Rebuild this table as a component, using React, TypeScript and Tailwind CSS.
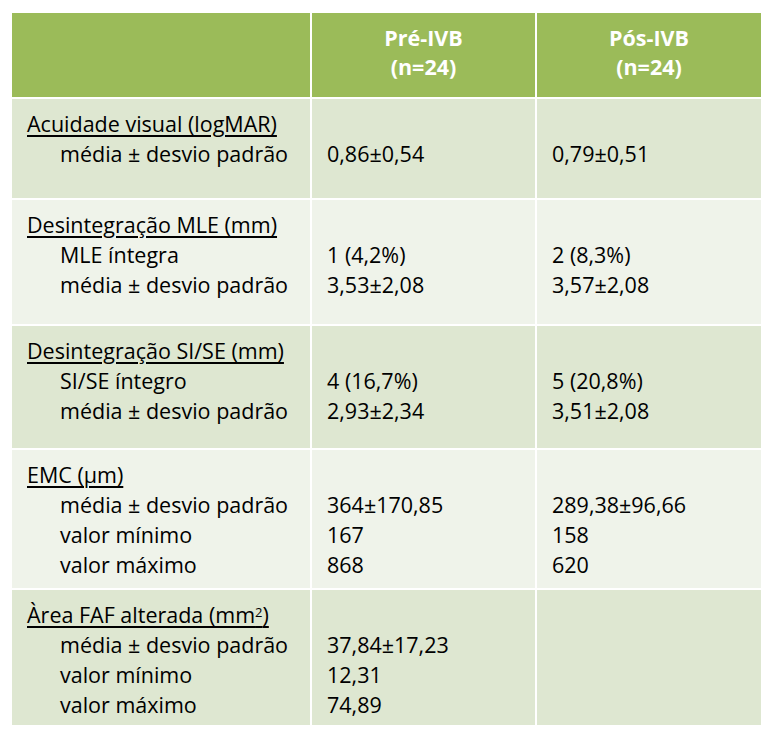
const rows = [
  {
    h: 'h-[99px]',
    bg: 'bg-[#dee7d1]',
    title: <>Acuidade visual (logMAR)</>,
    labels: ['média ± desvio padrão'],
    pre: ['0,86±0,54'],
    pos: ['0,79±0,51'],
  },
  {
    h: 'h-[124px]',
    bg: 'bg-[#eff3ea]',
    title: <>Desintegração MLE (mm)</>,
    labels: ['MLE íntegra', 'média ± desvio padrão'],
    pre: ['1 (4,2%)', '3,53±2,08'],
    pos: ['2 (8,3%)', '3,57±2,08'],
  },
  {
    h: 'h-[122px]',
    bg: 'bg-[#dee7d1]',
    title: <>Desintegração SI/SE (mm)</>,
    labels: ['SI/SE íntegro', 'média ± desvio padrão'],
    pre: ['4 (16,7%)', '2,93±2,34'],
    pos: ['5 (20,8%)', '3,51±2,08'],
  },
  {
    h: 'h-[138px]',
    bg: 'bg-[#eff3ea]',
    title: <>EMC (µm)</>,
    labels: ['média ± desvio padrão', 'valor mínimo', 'valor máximo'],
    pre: ['364±170,85', '167', '868'],
    pos: ['289,38±96,66', '158', '620'],
  },
  {
    h: 'h-[135px]',
    bg: 'bg-[#dee7d1]',
    title: (
      <>
        Àrea FAF alterada (mm<sup className="text-[13px]">2</sup>)
      </>
    ),
    labels: ['média ± desvio padrão', 'valor mínimo', 'valor máximo'],
    pre: ['37,84±17,23', '12,31', '74,89'],
    pos: [],
  },
];

const ValueCell = ({ values, bg, h }: { values: string[]; bg: string; h: string }) => (
  <div className={`${bg} ${h} pl-[15px] pt-[10px]`}>
    <div className="h-[30px]" />
    {values.map((v) => (
      <div key={v} className="h-[30px] leading-[30px]">{v}</div>
    ))}
  </div>
);

export default function App() {
  return (
    <div
      className="min-h-screen bg-white pt-[13px] pl-[12px] text-[21.5px] text-black"
      style={{ fontFamily: '"Open Sans", Lato, sans-serif' }}
    >
      <div className="grid grid-cols-[298px_223px_224px] gap-[2px] w-[749px] bg-white">
        <div className="bg-[#9bbb59] h-[84px]" />
        {['Pré-IVB', 'Pós-IVB'].map((t) => (
          <div
            key={t}
            className="bg-[#9bbb59] h-[84px] flex flex-col items-center pt-[10px] font-bold text-white leading-[29px]"
          >
            <div>{t}</div>
            <div>(n=24)</div>
          </div>
        ))}

        {rows.map((r, i) => (
          <div key={i} className="contents">
            <div className={`${r.bg} ${r.h} pl-[15px] pt-[10px]`}>
              <div className="h-[30px] leading-[30px] underline underline-offset-[3px] decoration-[1.5px]">{r.title}</div>
              {r.labels.map((l) => (
                <div key={l} className="h-[30px] leading-[30px] pl-[33px]">{l}</div>
              ))}
            </div>
            <ValueCell values={r.pre} bg={r.bg} h={r.h} />
            <ValueCell values={r.pos} bg={r.bg} h={r.h} />
          </div>
        ))}
      </div>
    </div>
  );
}
